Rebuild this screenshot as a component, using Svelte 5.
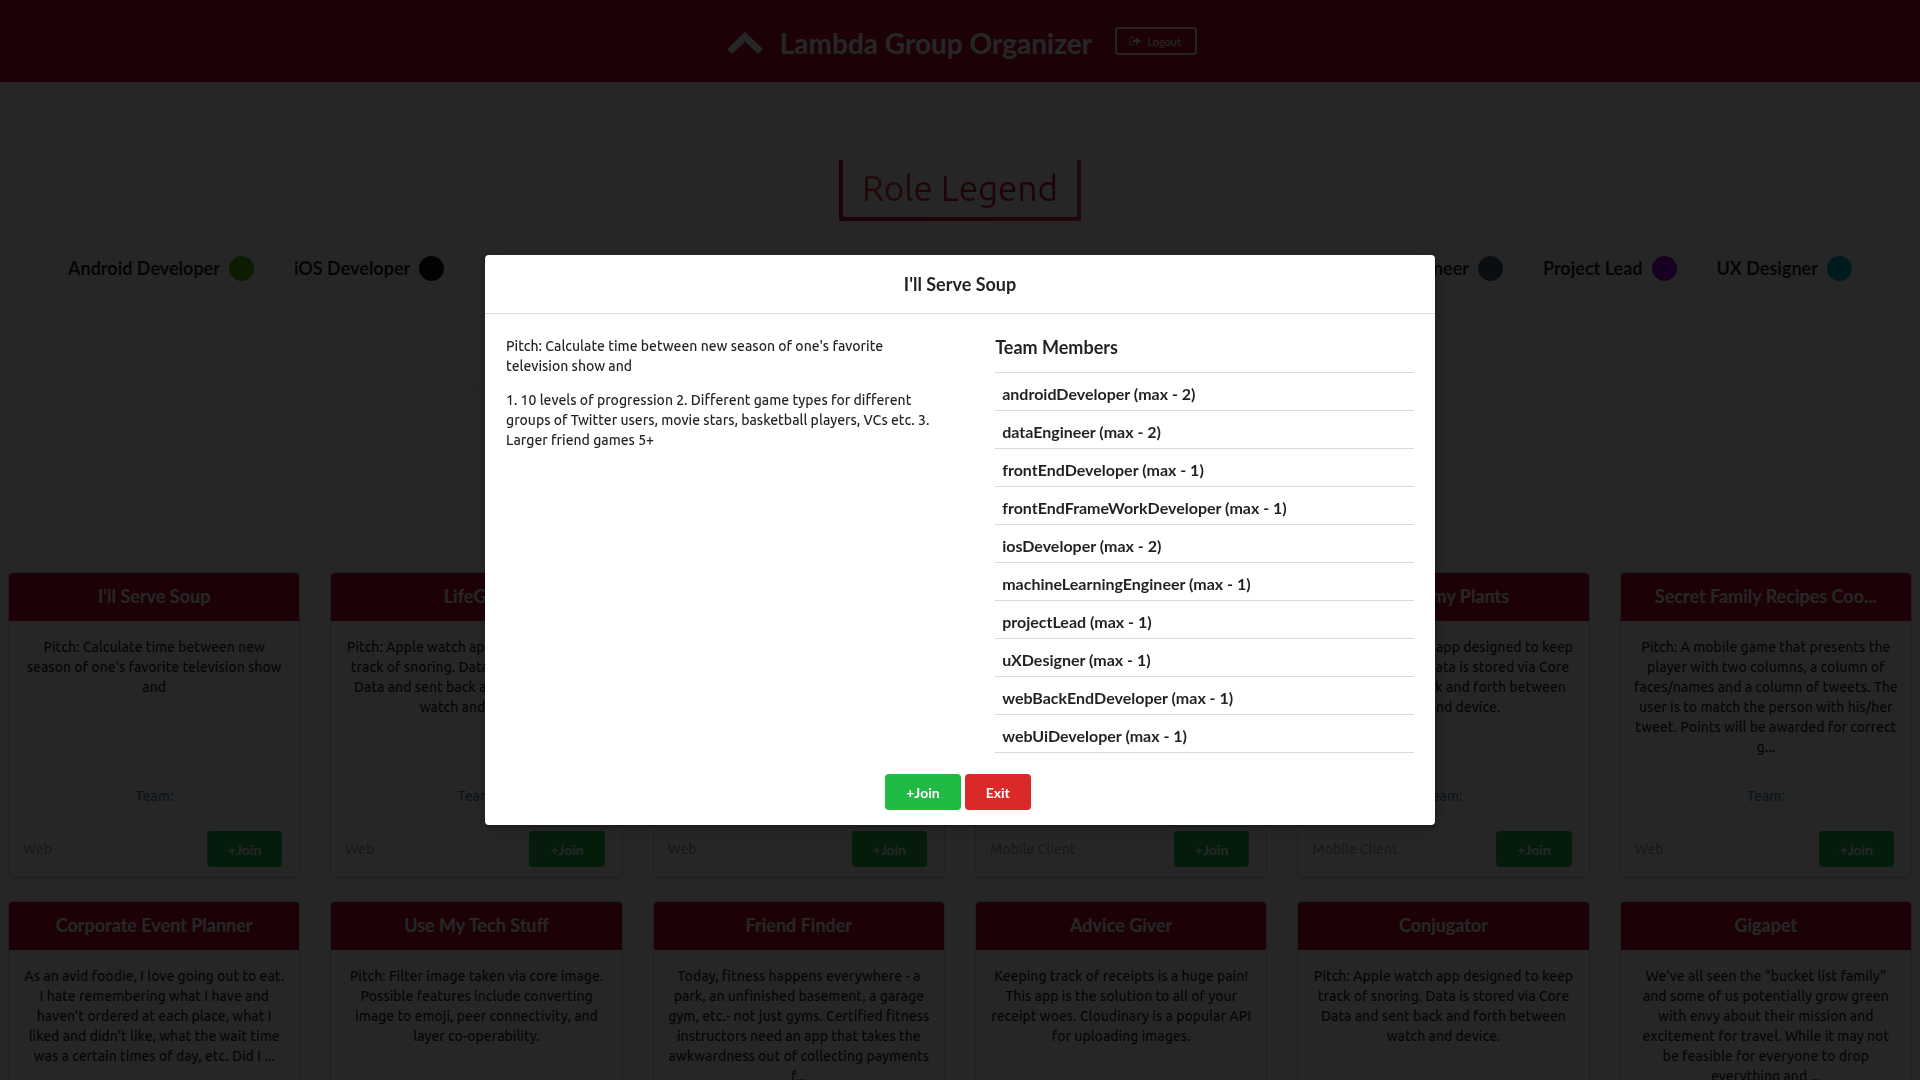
<script>
  let open = $state(true);

  const roles = [
    { name: 'Android Developer', tone: 'green' },
    { name: 'iOS Developer', tone: 'black' },
    { name: 'Web UI Developer', tone: 'orange' },
    { name: 'Front End Developer', tone: 'yellow' },
    { name: 'Back End Developer', tone: 'red' },
    { name: 'Data Engineer', tone: 'blue' },
    { name: 'ML Engineer', tone: 'slate' },
    { name: 'Project Lead', tone: 'purple' },
    { name: 'UX Designer', tone: 'teal' }
  ];

  const snoring =
    'Pitch: Apple watch app designed to keep track of snoring. Data is stored via Core Data and sent back and forth between watch and device.';

  const projects = [
    { title: "I'll Serve Soup", pitch: "Pitch: Calculate time between new season of one's favorite television show and", type: 'Web' },
    { title: 'LifeGPA', pitch: snoring, type: 'Web' },
    { title: 'School Luncher', pitch: snoring, type: 'Web' },
    { title: 'Split The Bill', pitch: snoring, type: 'Mobile Client' },
    { title: 'Water my Plants', pitch: snoring, type: 'Mobile Client' },
    { title: 'Secret Family Recipes Coo...', pitch: 'Pitch: A mobile game that presents the player with two columns, a column of faces/names and a column of tweets. The user is to match the person with his/her tweet. Points will be awarded for correct g...', type: 'Web' },
    { title: 'Corporate Event Planner', pitch: "As an avid foodie, I love going out to eat. I\u00a0hate remembering what I have and haven't ordered at each place, what I liked and didn't like, what the wait time was a certain times of day, etc. Did I ...", type: 'Web' },
    { title: 'Use My Tech Stuff', pitch: 'Pitch: Filter image taken via core image. Possible features include converting image to emoji, peer connectivity, and layer co-operability.', type: 'Web' },
    { title: 'Friend Finder', pitch: 'Today, fitness happens everywhere - a park, an unfinished basement, a garage gym, etc.- not just gyms. Certified fitness instructors need an app that takes the awkwardness out of collecting payments f...', type: 'Web' },
    { title: 'Advice Giver', pitch: 'Keeping track of receipts is a huge pain! This app is the solution to all of your receipt woes. Cloudinary is a popular API for uploading images.', type: 'Web' },
    { title: 'Conjugator', pitch: snoring, type: 'Web' },
    { title: 'Gigapet', pitch: 'We\'ve all seen the "bucket list family" and\u00a0some of us potentially grow green with envy about their mission and excitement for travel. While it may not be\u00a0feasible for everyone to drop everything and ...', type: 'Web' }
  ];

  const members = [
    ['androidDeveloper', 2],
    ['dataEngineer', 2],
    ['frontEndDeveloper', 1],
    ['frontEndFrameWorkDeveloper', 1],
    ['iosDeveloper', 2],
    ['machineLearningEngineer', 1],
    ['projectLead', 1],
    ['uXDesigner', 1],
    ['webBackEndDeveloper', 1],
    ['webUiDeveloper', 1]
  ];
</script>

<div class="page">
  <header class="top">
    <svg class="mark" viewBox="0 0 36 22" aria-hidden="true">
      <path d="M2.500 19.500 L18 4.800 L33.500 19.500" />
    </svg>
    <h1>Lambda Group Organizer</h1>
    <button class="logout" type="button">
      <svg viewBox="0 0 12 10" aria-hidden="true">
        <path class="line" d="M5 1H2.5Q1 1 1 2.5v5Q1 9 2.500 9H5" />
        <path class="solid" d="M4 3.800h3V1.200L11.500 5 7 8.800V6.200H4z" />
      </svg>
      Logout
    </button>
  </header>

  <section class="legend">
    <h2><span>Role Legend</span></h2>
    <ul>
      {#each roles as role}
        <li>{role.name}<i class={role.tone}></i></li>
      {/each}
    </ul>
  </section>

  <main class="cards">
    {#each projects as project}
      <article class="card">
        <h3>{project.title}</h3>
        <p class="pitch">{project.pitch}</p>
        <a class="team" href="#team">Team:</a>
        <footer>
          <span>{project.type}</span>
          <button class="btn green-btn" type="button">+Join</button>
        </footer>
      </article>
    {/each}
  </main>
</div>

{#if open}
  <div class="dimmer">
    <div class="modal" role="dialog" aria-modal="true" aria-labelledby="modal-title">
      <h2 id="modal-title">I'll Serve Soup</h2>
      <div class="content">
        <div class="about">
          <p>Pitch: Calculate time between new season of one's favorite television show and</p>
          <p>1. 10 levels of progression 2. Different game types for different groups of Twitter users, movie stars, basketball players, VCs etc. 3. Larger friend games 5+</p>
        </div>
        <div class="members">
          <h3>Team Members</h3>
          <ul>
            {#each members as [name, max]}
              <li>{name} (max - {max})</li>
            {/each}
          </ul>
        </div>
      </div>
      <div class="actions">
        <button class="btn green-btn" type="button">+Join</button>
        <button class="btn red-btn" type="button" onclick={() => (open = false)}>Exit</button>
      </div>
    </div>
  </div>
{/if}

<style>
  :global(body) {
    margin: 0;
    overflow: hidden;
    background: #fff;
    color: rgba(0, 0, 0, 0.87);
    font: 500 14px/20px Ubuntu, 'Open Sans', sans-serif;
  }
  * { box-sizing: border-box; }
  h1, h2, h3, p, ul { margin: 0; padding: 0; }
  ul { list-style: none; }
  h1, h3, .modal h2, .legend li, .members li, button {
    font-family: Lato, sans-serif;
    font-weight: 700;
  }

  .top {
    display: flex;
    justify-content: center;
    align-items: center;
    height: 82px;
    padding: 4px 0 0 4px;
    background: #bb1333;
    color: #fff;
  }
  .mark { width: 36px; height: 22px; margin-right: 17px; }
  .mark path { fill: none; stroke: #fff; stroke-width: 7; }
  h1 { font-size: 28px; line-height: 36px; }
  .logout {
    display: flex;
    align-items: center;
    justify-content: center;
    gap: 6px;
    width: 82px;
    height: 28px;
    margin: 0 0 4px 23px;
    padding: 0 2px 0 0;
    border: 2px solid #fff;
    border-radius: 4px;
    background: transparent;
    color: #fff;
    font-size: 11px;
    font-weight: 400;
  }
  .logout svg { width: 12px; height: 10px; }
  .line { fill: none; stroke: #fff; stroke-width: 1; }
  .solid { fill: #fff; }

  .legend {
    display: flex;
    flex-direction: column;
    align-items: center;
    padding: 78px 68px 104px;
    border-bottom: 1px solid #e4e4e5;
  }
  .legend h2 {
    padding: 0 19px;
    border: 4px solid;
    border-top: 0;
    border-image: linear-gradient(to right, #bb1333, #d8343f) 4;
    font-size: 35px;
    font-weight: 400;
    line-height: 57px;
  }
  .legend h2 span {
    background: linear-gradient(to right, #d8343f, #bb1333);
    background-clip: text;
    color: transparent;
  }
  .legend ul {
    display: flex;
    justify-content: space-between;
    align-self: stretch;
    margin-top: 34px;
    white-space: nowrap;
  }
  .legend li { display: flex; align-items: center; gap: 9px; font-size: 18px; line-height: 26px; }
  i { width: 25px; height: 25px; border-radius: 50%; }
  .green { background: #53b800; }
  .black { background: #111; }
  .orange { background: #f2711c; }
  .yellow { background: #fbbd08; }
  .red { background: #db2828; }
  .blue { background: #2185d0; }
  .slate { background: #45606f; }
  .purple { background: #9b00e0; }
  .teal { background: #00b5c8; }

  .cards {
    display: grid;
    grid-template-columns: repeat(6, 1fr);
    gap: 25px 32px;
    padding: 187px 9px 0;
  }
  .card {
    display: flex;
    flex-direction: column;
    min-height: 304px;
    border-radius: 4px;
    background: #fff;
    box-shadow: 0 1px 3px #d4d4d5, 0 0 0 1px #d4d4d5;
    text-align: center;
  }
  .card h3 {
    padding: 10px 14px 12px;
    border-radius: 4px 4px 0 0;
    background: #bb1333;
    color: #fff;
    font-size: 18px;
    line-height: 26px;
  }
  .pitch { min-height: 150px; padding: 16px 12px 0; }
  .team { align-self: center; margin-top: 15px; color: #4183c4; text-decoration: none; }
  .card footer {
    display: flex;
    align-items: center;
    justify-content: space-between;
    margin-top: auto;
    padding: 0 17px 10px 14px;
    color: rgba(0, 0, 0, 0.4);
  }

  .btn {
    height: 36px;
    padding: 0 21px;
    border: 0;
    border-radius: 4px;
    color: #fff;
    font-size: 14px;
  }
  .green-btn { background: #21ba45; }
  .red-btn { background: #db2828; }

  .dimmer {
    position: fixed;
    inset: 0;
    display: flex;
    align-items: center;
    justify-content: center;
    background: rgba(0, 0, 0, 0.85);
  }
  .modal {
    width: 950px;
    max-width: 95%;
    border-radius: 4px;
    background: #fff;
    box-shadow: 1px 3px 3px rgba(0, 0, 0, 0.2), 1px 3px 15px 2px rgba(0, 0, 0, 0.2);
  }
  .modal h2 {
    padding: 16px 21px;
    border-bottom: 1px solid #dcddde;
    font-size: 18px;
    line-height: 26px;
    text-align: center;
  }
  .content {
    display: grid;
    grid-template-columns: 51fr 50fr;
    gap: 62px;
    padding: 20px 21px 0;
  }
  .about { padding-top: 2px; }
  .about p + p { margin-top: 14px; }
  .members h3 { padding-bottom: 12px; font-size: 18px; line-height: 26px; }
  .members ul { border-top: 1px solid #d8d9da; }
  .members li {
    padding: 9px 7px 4px;
    border-bottom: 1px solid #d8d9da;
    font-size: 16px;
    line-height: 24px;
  }
  .actions {
    display: flex;
    justify-content: center;
    gap: 4px;
    padding: 21px 25px 15px 21px;
  }
</style>
